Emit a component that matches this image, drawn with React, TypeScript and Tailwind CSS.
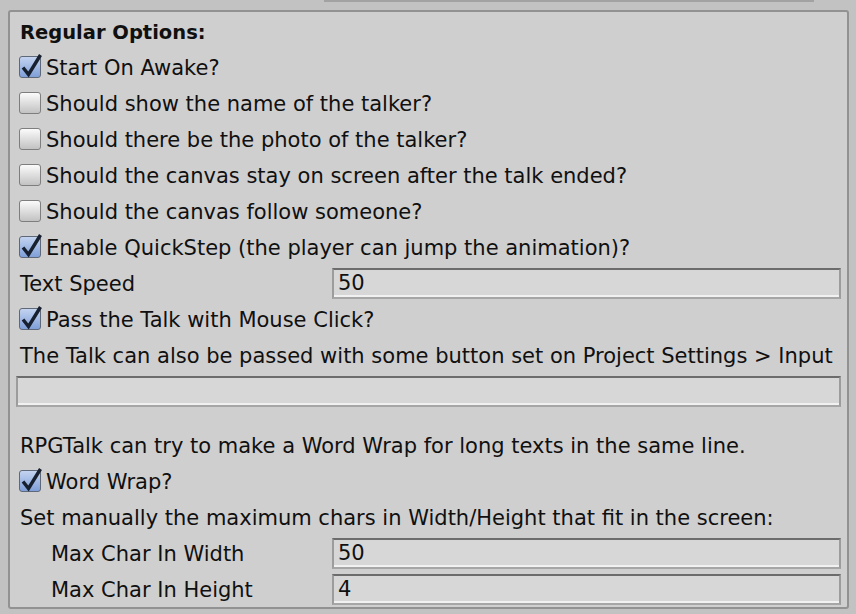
type CheckProps = {
  checked?: boolean;
  label: string;
};

const Checkbox = ({ checked = false, label }: CheckProps) => (
  <div className="flex h-9 items-center">
    <span
      className={
        checked
          ? "relative ml-px h-[22px] w-[22px] shrink-0 rounded-[3px] border border-[#5f6878] bg-gradient-to-b from-[#c4d4f0] to-[#7f9fd8]"
          : "relative ml-px h-[22px] w-[22px] shrink-0 rounded-[3px] border border-[#7e7e7e] bg-gradient-to-b from-[#fbfbfb] to-[#c2c2c2]"
      }
    >
      {checked && (
        <svg
          viewBox="0 0 22 22"
          className="absolute left-0 top-0 h-[22px] w-[22px] overflow-visible"
          aria-hidden="true"
        >
          <path
            d="M3 10.5 L8.5 17.5 L20.5 -2"
            fill="none"
            stroke="#17202f"
            strokeWidth="3.4"
            strokeLinejoin="miter"
          />
        </svg>
      )}
    </span>
    <span className="ml-[5px] whitespace-nowrap pt-1">{label}</span>
  </div>
);

type FieldProps = {
  label: string;
  value: string;
  indent?: boolean;
};

const TextBox = ({ value, className }: { value: string; className?: string }) => (
  <div
    className={
      "flex h-[31px] items-center border-2 border-t-[#6c6c6c] border-x-[#9c9c9c] border-b-[#a6a6a6] bg-[#d7d7d7] pl-1 pt-0.5 shadow-[inset_0_-2px_0_#f1f1f1] " +
      (className ?? "")
    }
  >
    {value}
  </div>
);

const Field = ({ label, value, indent }: FieldProps) => (
  <div className="flex h-9 items-center">
    <div className={indent ? "w-[314px] shrink-0 pl-[33px] pt-1" : "w-[314px] shrink-0 pl-[2px] pt-1"}>{label}</div>
    <TextBox value={value} className="flex-1" />
  </div>
);

const Line = ({ children }: { children: React.ReactNode }) => (
  <div className="flex h-9 items-center whitespace-nowrap pl-[2px] pt-1">{children}</div>
);

export default function App() {
  return (
    <div
      className="h-[614px] w-[856px] overflow-hidden bg-[#c2c2c2] text-[21px] text-[#101010]"
      style={{ fontFamily: '"DejaVu Sans", sans-serif' }}
    >
      <div className="ml-[324px] h-[2px] w-[490px] bg-[#a2a2a2]" />
      <div className="ml-2 mt-2 h-[599px] w-[841px] rounded-[3px] border-2 border-[#929292] bg-[#cfcfcf] pl-2 pr-1.5 pt-px">
        <div className="flex h-9 items-center pl-[2px] pt-1 text-[19.5px] font-bold">Regular Options:</div>
        <Checkbox checked label="Start On Awake?" />
        <Checkbox label="Should show the name of the talker?" />
        <Checkbox label="Should there be the photo of the talker?" />
        <Checkbox label="Should the canvas stay on screen after the talk ended?" />
        <Checkbox label="Should the canvas follow someone?" />
        <Checkbox checked label="Enable QuickStep (the player can jump the animation)?" />
        <Field label="Text Speed" value="50" />
        <Checkbox checked label="Pass the Talk with Mouse Click?" />
        <Line>The Talk can also be passed with some button set on Project Settings &gt; Input</Line>
        <div className="flex h-9 items-center">
          <TextBox value="" className="-ml-0.5 flex-1" />
        </div>
        <div className="h-[18px]" />
        <Line>RPGTalk can try to make a Word Wrap for long texts in the same line.</Line>
        <Checkbox checked label="Word Wrap?" />
        <Line>Set manually the maximum chars in Width/Height that fit in the screen:</Line>
        <Field indent label="Max Char In Width" value="50" />
        <Field indent label="Max Char In Height" value="4" />
      </div>
    </div>
  );
}
